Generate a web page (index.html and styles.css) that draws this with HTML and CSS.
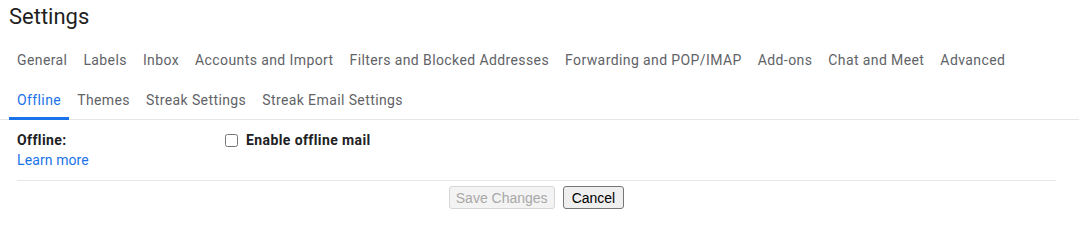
FILE: index.html
```html
<!DOCTYPE html>
<html lang="en">
<head>
    <meta charset="UTF-8">
    <title>Settings</title>
    <link rel="stylesheet" href="styles.css">
</head>
<body id="page">
    <h1 class="title">Settings</h1>

    <div class="tabs">
        <div class="tab-row">
            <a class="tab">General</a>
            <a class="tab">Labels</a>
            <a class="tab">Inbox</a>
            <a class="tab">Accounts and Import</a>
            <a class="tab">Filters and Blocked Addresses</a>
            <a class="tab">Forwarding and POP/IMAP</a>
            <a class="tab">Add-ons</a>
            <a class="tab">Chat and Meet</a>
            <a class="tab">Advanced</a>
        </div>
        <div class="tab-row last">
            <a class="tab active">Offline</a>
            <a class="tab">Themes</a>
            <a class="tab">Streak Settings</a>
            <a class="tab">Streak Email Settings</a>
        </div>
    </div>

    <div class="section">
        <div class="section-label">
            <div class="label-title">Offline:</div>
            <a class="learn-more">Learn more</a>
        </div>
        <div class="section-body">
            <label class="check">
                <input type="checkbox">
                <span>Enable offline mail</span>
            </label>
        </div>
    </div>

    <div class="actions">
        <button class="btn" disabled>Save Changes</button>
        <button class="btn btn-cancel">Cancel</button>
    </div>
</body>
</html>
```

FILE: styles.css
```css
body {
    margin: 0;
    background: #fff;
    font-family: Roboto, "Liberation Sans", sans-serif;
    color: #202124;
}

.title {
    margin: 0;
    height: 40px;
    padding-left: 9px;
    padding-top: 3px;
    box-sizing: border-box;
    font-size: 22px;
    font-weight: 400;
    line-height: 28px;
    color: #1f1f1f;
}

.tabs {
    width: 1079px;
    padding-left: 9px;
    box-sizing: border-box;
    border-bottom: 1px solid #e6e6e6;
}
.tab-row {
    display: flex;
    height: 40px;
}
.tab-row.last {
    height: 39px;
}
.tab {
    display: flex;
    align-items: center;
    padding: 2px 8px 0;
    font-size: 14px;
    letter-spacing: 0.4px;
    color: #5f6368;
    cursor: pointer;
    box-sizing: border-box;
    border-bottom: 3px solid transparent;
    margin-bottom: -1px;
    height: 41px;
}
.tab-row.last .tab {
    height: 40px;
    padding-top: 3px;
}
.tab.active {
    color: #1a73e8;
    border-bottom-color: #1a73e8;
}

.section {
    display: flex;
    margin-left: 17px;
    width: 1039px;
    padding: 10px 0;
    border-bottom: 1px solid #e6e6e6;
    font-size: 14px;
    line-height: 20px;
    letter-spacing: 0.4px;
}
.section-label {
    width: 208px;
}
.label-title {
    font-weight: 700;
    color: #202124;
}
.learn-more {
    color: #1a73e8;
    letter-spacing: 0.1px;
    cursor: pointer;
}
.check {
    display: flex;
    align-items: center;
    font-weight: 700;
}
.check input {
    width: 13px;
    height: 13px;
    margin: 0 8px 0 0;
}

.actions {
    display: flex;
    justify-content: center;
    gap: 8px;
    margin-left: 17px;
    width: 1039px;
    padding-top: 5px;
}
.btn {
    font-family: "Liberation Sans", Arial, sans-serif;
    font-size: 14px;
    height: 23px;
    padding: 0 6px;
    border: 1px solid #767676;
    border-radius: 3px;
    background: #efefef;
    color: #000;
}
.btn-cancel {
    padding: 0 8px;
}
.btn:disabled {
    border-color: #d6d6d6;
    background: #f3f3f3;
    color: #a8a8a8;
}
```
